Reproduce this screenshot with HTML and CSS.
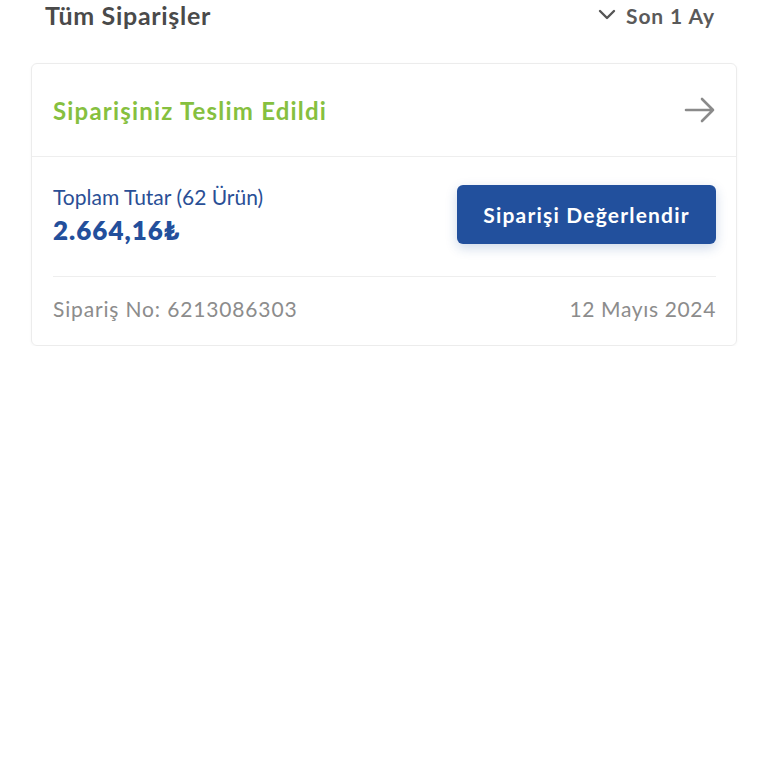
FILE: index.html
```html
<!DOCTYPE html>
<html lang="tr">
<head>
<meta charset="utf-8">
<link rel="stylesheet" href="styles.css">
</head>
<body>
<div class="page">
  <div class="topbar">
    <h1 class="title">Tüm Siparişler</h1>
    <div class="filter">
      <svg class="chev" width="18" height="12" viewBox="0 0 18 12"><path d="M2 2 L9 9 L16 2" fill="none" stroke="#555" stroke-width="2.4" stroke-linecap="round" stroke-linejoin="round"/></svg>
      <span>Son 1 Ay</span>
    </div>
  </div>
  <div class="card">
    <div class="card-head">
      <span class="status">Siparişiniz Teslim Edildi</span>
      <svg class="arrow" width="32" height="26" viewBox="0 0 32 26"><path d="M2 13 H29 M18 2 L29 13 L18 24" fill="none" stroke="#8a8a8a" stroke-width="2.6" stroke-linecap="round" stroke-linejoin="round"/></svg>
    </div>
    <div class="card-body">
      <div class="total-row">
        <div class="total">
          <div class="total-label">Toplam Tutar (62 Ürün)</div>
          <div class="total-value">2.664,16₺</div>
        </div>
        <button class="rate-btn">Siparişi Değerlendir</button>
      </div>
      <div class="meta">
        <span class="order-no">Sipariş No: 6213086303</span>
        <span class="date">12 Mayıs 2024</span>
      </div>
    </div>
  </div>
</div>
</body>
</html>
```

FILE: styles.css
```css
* { box-sizing: border-box; }
html, body { margin: 0; padding: 0; background: #fff; }
body { font-family: "Lato", "Noto Sans", sans-serif; }
.page { padding: 0 31px; }
.topbar {
  display: flex;
  justify-content: space-between;
  align-items: center;
  height: 30px;
  padding: 0 22px 0 14px;
}
.title {
  margin: 0;
  font-size: 25px;
  font-weight: 700;
  letter-spacing: 0.7px;
  color: #4a4a4a;
}
.filter {
  display: flex;
  align-items: center;
  gap: 10px;
  font-size: 21px;
  font-weight: 700;
  letter-spacing: 0.9px;
  color: #5a5a5a;
}
.card {
  margin-top: 33px;
  border: 1px solid #ececec;
  border-radius: 6px;
  box-shadow: 0 1px 3px rgba(0,0,0,0.04);
}
.card-head {
  display: flex;
  justify-content: space-between;
  align-items: center;
  height: 93px;
  padding: 0 20px 0 21px;
  border-bottom: 1px solid #eeeeee;
}
.status {
  font-size: 24px;
  font-weight: 700;
  letter-spacing: 1.2px;
  color: #86c03f;
}
.card-body { padding: 0 20px 0 21px; }
.total-row {
  display: flex;
  justify-content: space-between;
  align-items: center;
  height: 120px;
  border-bottom: 1px solid #eeeeee;
}
.total { margin-top: -4px; }
.total-label {
  font-size: 21px;
  line-height: 24px;
  color: #2a4f96;
}
.total-value {
  margin-top: 6px;
  font-size: 26px;
  line-height: 30px;
  font-weight: 800;
  letter-spacing: 1px;
  color: #234f9c;
}
.rate-btn {
  width: 259px;
  height: 59px;
  margin-bottom: 4px;
  border: none;
  border-radius: 6px;
  background: #22509d;
  color: #fff;
  font-family: inherit;
  font-size: 21px;
  font-weight: 700;
  letter-spacing: 1.2px;
  box-shadow: 0 4px 12px rgba(34,80,157,0.22);
}
.meta {
  display: flex;
  justify-content: space-between;
  align-items: center;
  height: 68px;
  padding-bottom: 6px;
  font-size: 21px;
  color: #8c8c8c;
}
.order-no { letter-spacing: 0.85px; }
.date { letter-spacing: 0.65px; }
```
